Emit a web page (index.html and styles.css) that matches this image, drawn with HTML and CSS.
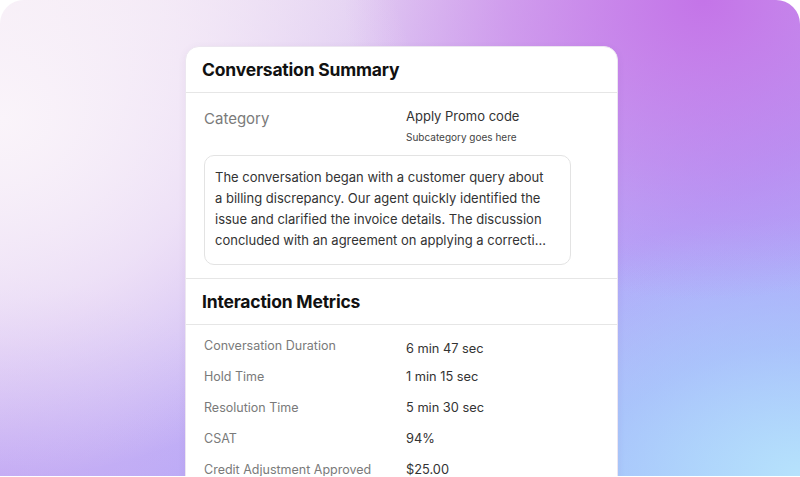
FILE: index.html
```html
<!DOCTYPE html>
<html>
<head>
<meta charset="utf-8">
<link rel="stylesheet" href="styles.css">
</head>
<body>
<div class="frame">
  <div class="card">
    <div class="card-head">Conversation Summary</div>
    <div class="summary">
      <div class="cat-row">
        <div class="cat-label">Category</div>
        <div class="cat-value">
          <div class="cat-main">Apply Promo code</div>
          <div class="cat-sub">Subcategory goes here</div>
        </div>
      </div>
      <div class="text-box">The conversation began with a customer query about a billing discrepancy. Our agent quickly identified the issue and clarified the invoice details. The discussion concluded with an agreement on applying a correcti...</div>
    </div>
    <div class="card-head">Interaction Metrics</div>
    <div class="metrics">
      <div class="metric"><span class="m-label">Conversation Duration</span><span class="m-value m-low">6 min 47 sec</span></div>
      <div class="metric"><span class="m-label">Hold Time</span><span class="m-value">1 min 15 sec</span></div>
      <div class="metric"><span class="m-label">Resolution Time</span><span class="m-value">5 min 30 sec</span></div>
      <div class="metric"><span class="m-label">CSAT</span><span class="m-value">94%</span></div>
      <div class="metric"><span class="m-label">Credit Adjustment Approved</span><span class="m-value">$25.00</span></div>
    </div>
  </div>
</div>
</body>
</html>
```
FILE: styles.css
```css
html, body {
  margin: 0;
  padding: 0;
  background: #ffffff;
  font-family: "Inter", "DejaVu Sans", sans-serif;
}
.frame {
  width: 800px;
  height: 476px;
  box-sizing: border-box;
  border-radius: 24px 24px 0 0;
  overflow: hidden;
  padding: 46px 0 0 185px;
  background:
    radial-gradient(ellipse 420px 360px at 0% 25%, rgba(250,244,250,1) 0%, rgba(250,244,250,0.6) 50%, rgba(250,244,250,0) 100%),
    radial-gradient(ellipse 360px 300px at 88% 0%, rgba(196,116,232,1) 0%, rgba(196,116,232,0.5) 55%, rgba(196,116,232,0) 100%),
    radial-gradient(ellipse 400px 260px at 100% 100%, rgba(182,226,252,1) 0%, rgba(168,208,252,0.6) 50%, rgba(168,208,252,0) 100%),
    radial-gradient(ellipse 260px 240px at 100% 50%, rgba(176,166,250,0.9) 0%, rgba(176,166,250,0) 100%),
    radial-gradient(ellipse 260px 200px at 0% 100%, rgba(196,170,244,0.8) 0%, rgba(196,170,244,0) 100%),
    linear-gradient(150deg, #f2e6f2 0%, #d8c0f2 38%, #b6a8f8 66%, #a2c0fa 100%);
}
.card {
  width: 433px;
  height: 460px;
  box-sizing: border-box;
  background: #ffffff;
  border: 1px solid #ece6f0;
  border-radius: 14px 14px 0 0;
  box-shadow: 0 2px 8px rgba(80, 40, 120, 0.06);
}
.card-head {
  height: 45px;
  display: flex;
  align-items: center;
  padding: 0 16px;
  font-size: 17.5px;
  font-weight: 700;
  color: #111111;
  letter-spacing: -0.2px;
  border-bottom: 1px solid #e6e6e6;
}
.summary {
  padding: 13px 18px 13px 18px;
  border-bottom: 1px solid #e6e6e6;
}
.cat-row {
  display: flex;
}
.cat-label {
  width: 202px;
  font-size: 15px;
  color: #7a7a7a;
  padding-top: 3px;
}
.cat-main {
  font-size: 13px;
  color: #333333;
  line-height: 20px;
}
.cat-sub {
  font-size: 10px;
  color: #444444;
  margin-top: 4px;
  line-height: 14px;
}
.text-box {
  margin-top: 11px;
  width: 367px;
  box-sizing: border-box;
  border: 1px solid #e3e3e3;
  border-radius: 10px;
  padding: 11px 24px 13px 10px;
  font-size: 13px;
  line-height: 21px;
  color: #333333;
}
.metrics {
  padding: 5px 18px 0 18px;
}
.metric {
  display: flex;
  height: 31px;
  align-items: center;
}
.m-label {
  width: 202px;
  font-size: 12.5px;
  color: #7a7a7a;
}
.m-value {
  font-size: 12.8px;
  color: #333333;
}
.m-low {
  position: relative;
  top: 3px;
}
```
